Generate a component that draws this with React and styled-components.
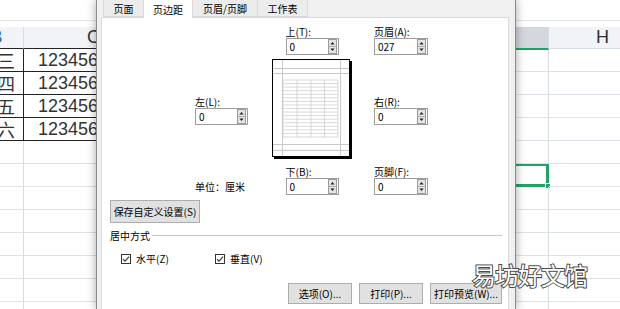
import React from 'react';
import styled, { createGlobalStyle } from 'styled-components';

const GlobalStyle = createGlobalStyle`
	html, body {
		margin: 0;
		padding: 0;
		background: #fff;
		overflow: hidden;
	}
	#root {
		width: 620px;
		height: 309px;
	}
`;

const cjk = `"Noto Sans CJK SC", "Microsoft YaHei", sans-serif`;

const Screen = styled.div`
	position: relative;
	width: 620px;
	height: 309px;
	display: flex;
	overflow: hidden;
	background: #fff;
	font-family: ${cjk};
`;

/* ---------- spreadsheet behind the dialog ---------- */

const Sheet = styled.div`
	width: ${(p) => (p.$width ? `${p.$width}px` : 'auto')};
	flex: ${(p) => (p.$width ? 'none' : '1')};
	overflow: hidden;
	display: flex;
	flex-direction: column;
	background: #fff;
`;

const FormulaBar = styled.div`
	height: 20px;
	flex: none;
	border-bottom: 1px solid #e2e5ea;
	background: #fff;
`;

const BarGap = styled.div`
	height: 6px;
	flex: none;
	background: #fff;
`;

const SheetGrid = styled.div`
	display: grid;
	grid-template-columns: ${(p) => p.$cols};
	margin-left: ${(p) => p.$shift || 0}px;
	width: max-content;
`;

const HeaderCell = styled.div`
	height: 21px;
	box-sizing: content-box;
	display: flex;
	align-items: center;
	justify-content: center;
	font-family: 'Liberation Sans', Arial, sans-serif;
	font-size: 18px;
	color: ${(p) => (p.$blue ? '#2f6fbd' : '#333')};
	background: ${(p) => (p.$selected ? '#d3d7de' : '#f1f3f6')};
	border-right: 1px solid #d6dce6;
	border-bottom: ${(p) =>
		p.$selected ? '2px solid #21a366' : p.$dark ? '1px solid #222' : '1px solid #d6dce6'};
	margin-bottom: ${(p) => (p.$selected ? '-1px' : '0')};
	position: relative;
	z-index: ${(p) => (p.$selected ? 1 : 0)};
`;

const Cell = styled.div`
	height: 22px;
	display: flex;
	align-items: center;
	justify-content: ${(p) => (p.$right ? 'flex-end' : 'flex-start')};
	padding: 0 ${(p) => (p.$right ? '8px' : '0')} 0 ${(p) => (p.$right ? '0' : '14px')};
	font-family: 'Liberation Sans', Arial, ${cjk};
	font-size: 18px;
	color: #333;
	white-space: nowrap;
	overflow: hidden;
	border-bottom: 1px solid ${(p) => (p.$dark ? '#222' : '#dde2ea')};
	border-right: 1px solid ${(p) => (p.$darkRight ? '#222' : '#d6dce6')};
	position: relative;
`;

const SelectedCell = styled(Cell)`
	overflow: visible;
	box-shadow: inset 0 0 0 2px #21a366;
	border-color: #21a366;
	&::after {
		content: '';
		position: absolute;
		right: -3px;
		bottom: -3px;
		width: 4px;
		height: 4px;
		background: #21a366;
		border: 1px solid #fff;
	}
`;

/* ---------- dialog ---------- */

const Dialog = styled.div`
	width: 420px;
	flex: none;
	box-sizing: border-box;
	display: flex;
	flex-direction: column;
	background: #f0f0f0;
	border-left: 1px solid #8a8a8a;
	border-right: 1px solid #8a8a8a;
	padding: 0 6px 0 4px;
	box-shadow: 0 0 9px rgba(0, 0, 0, 0.35);
	z-index: 2;
`;

const TabStrip = styled.div`
	display: flex;
	height: 17px;
	flex: none;
	padding-left: 3px;
`;

const Tab = styled.div`
	width: ${(p) => p.$w}px;
	height: ${(p) => (p.$active ? 18 : 17)}px;
	box-sizing: border-box;
	display: flex;
	align-items: center;
	justify-content: center;
	margin-left: -1px;
	font-size: 10px;
	color: #000;
	background: ${(p) => (p.$active ? '#fff' : '#ececec')};
	border: 1px solid #d9d9d9;
	border-top: none;
	border-bottom: ${(p) => (p.$active ? 'none' : '1px solid #d9d9d9')};
	position: relative;
	z-index: ${(p) => (p.$active ? 1 : 0)};
`;

const Panel = styled.div`
	flex: 1;
	display: flex;
	flex-direction: column;
	background: #fff;
	border: 1px solid #d9d9d9;
	border-bottom: none;
	padding: 8px 6px 0 8px;
`;

const MarginGrid = styled.div`
	display: grid;
	grid-template-columns: 53px 24px 80px 22px 54px;
	margin-left: 85px;
`;

const Field = styled.div`
	grid-column: ${(p) => p.$col};
	grid-row: ${(p) => p.$row};
	justify-self: ${(p) => (p.$center ? 'center' : 'start')};
	align-self: ${(p) => p.$align || 'start'};
	display: flex;
	flex-direction: column;
`;

const Label = styled.div`
	font-size: 10px;
	line-height: 12px;
	height: 12px;
	color: #000;
	white-space: nowrap;
`;

const SpinBox = styled.div`
	width: ${(p) => p.$w}px;
	height: 17px;
	box-sizing: border-box;
	display: flex;
	align-items: center;
	border: 1px solid #9c9c9c;
	background: #fff;
	padding: 0 1px 0 3px;
	font-size: 10px;
	color: #000;
`;

const SpinValue = styled.span`
	flex: 1;
	line-height: 15px;
`;

const UnitText = styled.div`
	grid-column: 1;
	grid-row: 3;
	align-self: end;
	height: 17px;
	line-height: 17px;
	font-size: 10px;
	white-space: nowrap;
	color: #000;
`;

const PreviewBox = styled.div`
	grid-column: 3;
	grid-row: 2;
	width: 80px;
	height: 100px;
	margin: 4px 0 7px;
`;

const Button = styled.div`
	width: ${(p) => p.$w}px;
	height: ${(p) => p.$h || 21}px;
	box-sizing: border-box;
	display: flex;
	align-items: center;
	justify-content: center;
	background: #e1e1e1;
	border: 1px solid #adadad;
	font-size: 10px;
	color: #000;
	white-space: nowrap;
`;

const SaveButton = styled(Button)`
	margin-top: 5px;
`;

const GroupHeader = styled.div`
	display: flex;
	align-items: center;
	margin-top: 7px;
	height: 12px;
	font-size: 10px;
	line-height: 12px;
	color: #000;
	&::after {
		content: '';
		flex: 1;
		height: 1px;
		margin: 0 0 1px 2px;
		background: #c4c4c4;
	}
`;

const CheckRow = styled.div`
	display: flex;
	align-items: center;
	height: 12px;
	margin-top: 11px;
	padding-left: 11px;
`;

const CheckItem = styled.label`
	display: flex;
	align-items: center;
	gap: 5px;
	width: ${(p) => p.$w || 'auto'};
	font-size: 10px;
	line-height: 12px;
	color: #000;
`;

const ButtonRow = styled.div`
	display: flex;
	justify-content: flex-end;
	gap: 7px;
	margin-top: 18px;
`;

const Watermark = styled.div`
	position: absolute;
	left: 472px;
	top: 260px;
	font-family: ${cjk};
	font-size: 24px;
	line-height: 30px;
	letter-spacing: -1px;
	color: #fff;
	-webkit-text-stroke: 2px #4a4a4a;
	paint-order: stroke fill;
	z-index: 5;
	white-space: nowrap;
`;

/* ---------- drawings ---------- */

const Spinner = () => (
	<svg width="9" height="15" viewBox="0 0 9 15">
		<rect x="0.5" y="0.5" width="8" height="14" fill="#e4e4e4" stroke="#9a9a9a" />
		<line x1="1" y1="7.5" x2="8" y2="7.5" stroke="#b0b0b0" />
		<path d="M4.5 3 L2.4 5.6 H6.6 Z" fill="#222" />
		<path d="M4.5 12 L2.4 9.4 H6.6 Z" fill="#222" />
	</svg>
);

const CheckMark = () => (
	<svg width="10" height="10" viewBox="0 0 10 10">
		<rect x="0.5" y="0.5" width="9" height="9" fill="#fff" stroke="#333" />
		<path d="M2 5.1 L4 7.2 L8.1 2.6" fill="none" stroke="#333" strokeWidth="1.1" />
	</svg>
);

const PagePreview = () => {
	const rowLines = [];
	for (let i = 0; i <= 16; i++) {
		const y = 21 + (57 / 16) * i;
		rowLines.push(<line key={i} x1="11" x2="66" y1={y} y2={y} />);
	}
	const colLines = [11, 25, 39, 52.5, 66].map((x) => (
		<line key={x} x1={x} x2={x} y1="21" y2="78" />
	));
	return (
		<svg width="80" height="100" viewBox="0 0 80 100">
			<rect x="2" y="2" width="78" height="98" fill="#000" />
			<rect x="0.5" y="0.5" width="77" height="97" fill="#fff" stroke="#000" />
			<g stroke="#c9c9c9" strokeWidth="1">
				<line x1="10.5" x2="10.5" y1="1" y2="97" />
				<line x1="68.5" x2="68.5" y1="1" y2="97" />
				<line x1="1" x2="77" y1="9.5" y2="9.5" />
				<line x1="1" x2="77" y1="14.5" y2="14.5" />
				<line x1="1" x2="77" y1="85.5" y2="85.5" />
				<line x1="1" x2="77" y1="91.5" y2="91.5" />
			</g>
			<g stroke="#cfcfcf" strokeWidth="0.8">
				{rowLines}
				{colLines}
			</g>
		</svg>
	);
};

const SpinField = ({ label, value, col, row, center, align, w = 53 }) => (
	<Field $col={col} $row={row} $center={center} $align={align}>
		<Label>{label}</Label>
		<SpinBox $w={w}>
			<SpinValue>{value}</SpinValue>
			<Spinner />
		</SpinBox>
	</Field>
);

const names = ['张三', '李四', '王五', '赵六'];
const EMPTY_ROWS = 8;

const LeftSheet = () => (
	<Sheet $width={96}>
		<FormulaBar />
		<BarGap />
		<SheetGrid $cols="54px 140px" $shift={-30}>
			<HeaderCell $blue $dark>B</HeaderCell>
			<HeaderCell $dark>C</HeaderCell>
			{names.map((n) => (
				<React.Fragment key={n}>
					<Cell $right $dark $darkRight>
						{n}
					</Cell>
					<Cell $dark>123456789</Cell>
				</React.Fragment>
			))}
			{Array.from({ length: EMPTY_ROWS }).map((_, i) => (
				<React.Fragment key={i}>
					<Cell />
					<Cell />
				</React.Fragment>
			))}
		</SheetGrid>
	</Sheet>
);

// column G is scrolled so that only its right part shows beside the dialog
const RightSheet = () => (
	<Sheet>
		<FormulaBar />
		<BarGap />
		<SheetGrid $cols="86px 108px" $shift={-53}>
			<HeaderCell $selected>G</HeaderCell>
			<HeaderCell>H</HeaderCell>
			{Array.from({ length: 12 }).map((_, i) => (
				<React.Fragment key={i}>
					{i === 5 ? <SelectedCell /> : <Cell />}
					<Cell />
				</React.Fragment>
			))}
		</SheetGrid>
	</Sheet>
);

const tabs = [
	{ name: '页面', w: 41 },
	{ name: '页边距', w: 50, active: true },
	{ name: '页眉/页脚', w: 66 },
	{ name: '工作表', w: 51 },
];

const App = () => (
	<>
		<GlobalStyle />
		<Screen>
			<LeftSheet />
			<Dialog>
				<TabStrip>
					{tabs.map((t) => (
						<Tab key={t.name} $w={t.w} $active={t.active}>
							{t.name}
						</Tab>
					))}
				</TabStrip>
				<Panel>
					<MarginGrid>
						<SpinField label="上(T):" value="0" col={3} row={1} center />
						<SpinField label="页眉(A):" value="027" col={5} row={1} w={54} />
						<SpinField label="左(L):" value="0" col={1} row={2} align="center" />
						<PreviewBox>
							<PagePreview />
						</PreviewBox>
						<SpinField label="右(R):" value="0" col={5} row={2} align="center" w={54} />
						<UnitText>单位：厘米</UnitText>
						<SpinField label="下(B):" value="0" col={3} row={3} center />
						<SpinField label="页脚(F):" value="0" col={5} row={3} w={54} />
					</MarginGrid>
					<SaveButton $w={90} $h={23}>
						保存自定义设置(S)
					</SaveButton>
					<GroupHeader>居中方式</GroupHeader>
					<CheckRow>
						<CheckItem $w="94px">
							<CheckMark />
							水平(Z)
						</CheckItem>
						<CheckItem>
							<CheckMark />
							垂直(V)
						</CheckItem>
					</CheckRow>
					<ButtonRow>
						<Button $w={64}>选项(O)...</Button>
						<Button $w={64}>打印(P)...</Button>
						<Button $w={72}>打印预览(W)...</Button>
					</ButtonRow>
				</Panel>
			</Dialog>
			<RightSheet />
			<Watermark>易坊好文馆</Watermark>
		</Screen>
	</>
);

export default App;
